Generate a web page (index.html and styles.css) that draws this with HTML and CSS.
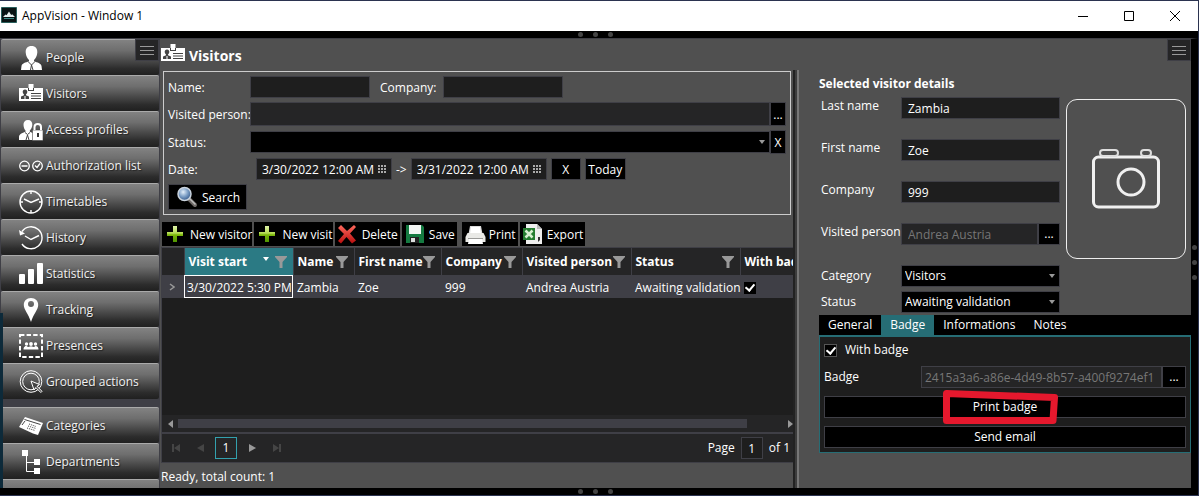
FILE: index.html
```html
<!DOCTYPE html>
<html lang="en">
<head>
<meta charset="utf-8">
<title>AppVision - Window 1</title>
<link rel="stylesheet" href="styles.css">
</head>
<body>
<svg class="defs" aria-hidden="true">
  <defs>
    <linearGradient id="green" x1="0" y1="0" x2="0" y2="1"><stop offset="0" stop-color="#dff2a8"/><stop offset=".45" stop-color="#b5dc54"/><stop offset=".55" stop-color="#7cb80c"/><stop offset="1" stop-color="#4f9400"/></linearGradient>
    <linearGradient id="red" x1="0" y1="0" x2="0" y2="1"><stop offset="0" stop-color="#ff6a5e"/><stop offset="1" stop-color="#b80d0d"/></linearGradient>
    <radialGradient id="lens" cx=".4" cy=".35" r=".7"><stop offset="0" stop-color="#e4effa"/><stop offset=".5" stop-color="#7d9fc6"/><stop offset="1" stop-color="#2c5184"/></radialGradient>
    <symbol id="badge" viewBox="0 0 24 24"><path fill="#fff" d="M0 6h9.500V2h5v4H24v13H0z"/><path fill="#444" d="M9 6h1v2h4V6h1v3H9zM12 11h10v1H12zM12 13.500h10v1H12zM12 16h10v1H12z"/><path fill="#444" d="M6 7.500c1.600 0 2.300 1 2.300 2.300S7.500 12 7 12.400v.8l3 1.200V17H2v-2.600l3-1.200v-.8C4.300 12 3.700 11 3.700 9.800S4.400 7.500 6 7.500z"/><path stroke="#fff" stroke-width="1" d="M6 14v3"/></symbol>
    <symbol id="plus" viewBox="0 0 24 24"><path fill="url(#green)" d="M10 4h4v6h6v4h-6v6h-4v-6H4v-4h6z"/></symbol>
    <symbol id="funnel" viewBox="0 0 12 12"><path fill="#999" d="M0 0h12v1L7.500 6v6h-3V6L0 1z"/></symbol>
    <symbol id="calendar" viewBox="0 0 9 9"><path fill="#aaa" d="M0 0h2v2H0zM3 0h2v2H3zM6 0h2v2H6zM0 3h2v2H0zM3 3h2v2H3zM6 3h2v2H6zM0 6h2v2H0zM3 6h2v2H3zM6 6h2v2H6z"/></symbol>
  </defs>
</svg>
<div class="window">
  <header class="titlebar">
    <svg class="logo" viewBox="0 0 16 16"><path fill="#0a1414" stroke="#295f5c" d="M.5.500h15v15H.5z"/><path fill="#e6efee" d="M2 10l2.500-2.500 1 .8L8 4.500l2.200 3.500 1-.8L14 10z"/><path stroke="#3c8a85" d="M3 11.500h10"/></svg>
    <h1 class="title">AppVision - Window 1</h1>
    <button class="sys" aria-label="Minimize"><svg viewBox="0 0 12 12"><path d="M1 6.500h10"/></svg></button>
    <button class="sys" aria-label="Maximize"><svg viewBox="0 0 12 12"><path d="M1.500 1.500h9v9h-9z"/></svg></button>
    <button class="sys" aria-label="Close"><svg viewBox="0 0 12 12"><path d="M1 1l10 10M11 1L1 11"/></svg></button>
  </header>
  <div class="edge"><i></i><i></i><i></i></div>
  <div class="body">
    <nav class="sidebar">
      <button class="burger side-burger" aria-label="Menu"><i></i><i></i><i></i></button>
      <a class="nav" href="#people"><svg viewBox="0 0 24 24"><path fill="#fff" d="M12.500 0C16.500 0 18.500 2.500 18.300 6.500c-.2 3.500-1.800 6-3.300 7.500v1.500c3.500.8 7 2 7.500 4.500l.5 4H2l.5-4c.5-2.500 4-3.700 7.500-4.500V14c-1.500-1.500-3.100-4-3.300-7.500C6.500 2.500 8.500 0 12.500 0z"/><path stroke="#444" fill="none" d="M9.500 16l3 3 3-3M12.500 19l-1 5M12.500 19l1.500 5"/></svg>People</a>
      <a class="nav" href="#visitors"><svg viewBox="0 0 24 24"><use href="#badge"/></svg>Visitors</a>
      <a class="nav" href="#access"><svg viewBox="0 0 24 24"><path fill="#fff" d="M9 2c3 0 4.500 2 4.300 5-.2 2.500-1.300 4.500-2.500 5.500v1.300l4 1.700V22H0v-3c0-2.500 3-4 6.500-5.200v-1.300C5.300 11.500 4.700 9.500 4.500 7 4.300 4 6 2 9 2z"/><path stroke="#444" fill="none" d="M6 14.500l2.500 2 2.500-2M8.500 17l-1.500 5M8.500 17l1.500 5"/><path fill="#fff" stroke="#444" stroke-width=".6" d="M13.500 12H24v10.500H13.500z"/><path stroke="#fff" stroke-width="2" fill="none" d="M15.500 12V9c0-4 6.500-4 6.500 0v3"/><path fill="#333" d="M18 15h2v4h-2z"/></svg>Access profiles</a>
      <a class="nav" href="#authorization"><svg viewBox="0 0 24 24"><g fill="none" stroke="#fff" stroke-width="1.300"><circle cx="5.500" cy="12" r="4.800"/><circle cx="18.500" cy="12" r="4.800"/><path d="M2.500 12h6M16 11.500l2 2 3-4"/></g></svg>Authorization list</a>
      <a class="nav" href="#timetables"><svg viewBox="0 0 24 24"><g fill="none" stroke="#fff" stroke-width="1.400"><circle cx="12" cy="12" r="11"/><path d="M5 9l7 3.500L20 9M12 1v3M12 20v3M1 12h3M20 12h3"/></g></svg>Timetables</a>
      <a class="nav" href="#history"><svg viewBox="0 0 24 24"><g fill="none" stroke="#fff" stroke-width="1.400"><path d="M3 5.500A11 11 0 1 1 3 18M6 10l6 3.500 8-4"/></g><path fill="#fff" d="M0 4l1 5.500 5-2z"/></svg>History</a>
      <a class="nav" href="#statistics"><svg viewBox="0 0 24 24"><g fill="#fff"><rect y="12" width="6" height="10" rx="1"/><rect x="9" y="7" width="6" height="15" rx="1"/><rect x="18" y="1" width="6" height="21" rx="1"/></g></svg>Statistics</a>
      <a class="nav" href="#tracking"><svg viewBox="0 0 24 24"><path fill="#fff" fill-rule="evenodd" d="M12 0c4.500 0 7.200 3 7.200 7 0 4.500-4.700 9-7.200 17C9.500 16 4.800 11.500 4.800 7c0-4 2.700-7 7.200-7zm0 3a3 3 0 1 0 0 6 3 3 0 0 0 0-6z"/></svg>Tracking</a>
      <a class="nav" href="#presences"><svg viewBox="0 0 24 24"><path fill="none" stroke="#fff" stroke-width="2" stroke-dasharray="4.400 2.200" d="M1 1h22v22H1z"/><g fill="#fff"><circle cx="7.500" cy="10" r="1.700"/><circle cx="12" cy="10" r="1.900"/><circle cx="16.500" cy="10" r="1.700"/><path d="M4.500 15.500c0-3 2-3.500 3-3.500l1.500 1 3-.8 3 .8 1.500-1c1 0 3 .500 3 3.500z"/></g></svg>Presences</a>
      <a class="nav" href="#grouped"><svg viewBox="0 0 24 24"><g fill="none" stroke="#fff"><circle cx="12" cy="11.500" r="10.800"/><circle cx="12" cy="11.500" r="8.300"/><path fill="#444" d="M12 11l3 9 1.800-2.500 5 5 1.200-1.200-5-5 2.500-1.800z"/></g></svg>Grouped actions</a>
      <a class="nav nav-group" href="#categories"><svg viewBox="0 0 24 24"><path fill="#fff" d="M6 3l18 6-5 12-5-1.500L0 13z"/><g fill="none" stroke="#444"><path d="M5.500 5.500l16 5M3 11l3-4"/><path stroke-dasharray="1 1" d="M9 12l8 2.500M8 14l8 2.500M10 10l7 2.500"/></g></svg>Categories</a>
      <a class="nav" href="#departments"><svg viewBox="0 0 24 24"><path fill="#fff" d="M3 0h6v6H3zM15 9h6v6h-6zM15 18h6v6h-6z"/><path fill="none" stroke="#fff" d="M7.500 6v15.500H15M7.500 12.500H15"/></svg>Departments</a>
      <span class="nav"></span>
    </nav>

    <main class="main">
      <h2 class="heading"><svg viewBox="0 0 24 24"><use href="#badge"/></svg>Visitors</h2>
      <form class="search" onsubmit="return false">
        <div class="row">
          <label class="key" for="name">Name:</label><input class="box short" id="name">
          <label class="key2" for="company">Company:</label><input class="box short" id="company">
        </div>
        <div class="row tall">
          <label class="key" for="visited">Visited person:</label><input class="box grow ro" id="visited" readonly><button class="btn pick">...</button>
        </div>
        <div class="row tall">
          <label class="key" for="status">Status:</label><span class="select grow"><select id="status"><option></option></select></span><button class="btn pick">X</button>
        </div>
        <div class="row dates">
          <label class="key" for="from">Date:</label>
          <span class="date"><input id="from" value="3/30/2022 12:00 AM"><svg viewBox="0 0 9 9"><use href="#calendar"/></svg></span>
          <label for="to">-&gt;</label>
          <span class="date"><input id="to" value="3/31/2022 12:00 AM"><svg viewBox="0 0 9 9"><use href="#calendar"/></svg></span>
          <button class="btn clear">X</button><button class="btn today">Today</button>
        </div>
        <button class="btn go"><svg viewBox="0 0 24 24"><path stroke="#6f6a68" stroke-width="4" stroke-linecap="round" d="M14 14l6 6"/><path stroke="#bbb" stroke-width="1.500" d="M14.500 13.500l6 6"/><circle cx="9.500" cy="9" r="6.500" fill="url(#lens)" stroke="#c9d3de" stroke-width="1.500"/></svg>Search</button>
      </form>

      <div class="toolbar">
        <button class="tool"><svg viewBox="0 0 24 24"><use href="#plus"/></svg>New visitor</button>
        <button class="tool"><svg viewBox="0 0 24 24"><use href="#plus"/></svg>New visit</button>
        <button class="tool snug"><svg viewBox="0 0 24 24"><path fill="url(#red)" d="M5 3l6 6 7-6 2 2-6 6.500 6 7-4 3-5.500-6.500L5 21.500 2 19l6-7-6-6z"/></svg>Delete</button>
        <button class="tool snug"><svg viewBox="0 0 24 24"><path fill="#157a41" d="M3 3h16l2 2v16H3z"/><path fill="#f2f5f3" d="M6 3h12v9H6z"/><path fill="#222" d="M7 15h9v6H7z"/><path fill="#ddd" d="M8 16h4v4H8z"/></svg>Save</button>
        <span class="gap"></span>
        <button class="tool snug"><svg viewBox="0 0 24 24"><path fill="#dcdcdc" d="M7 4h11l1.500 8h-14z"/><path fill="#fff" d="M8 5h9l1 7H7z"/><path fill="#e9e9e6" d="M4.500 11h16l2 4v5h-20v-5z"/><path fill="#9a9a98" d="M5 16h15v1H5z"/><path fill="#fff" d="M6 17h13l1 5H5z"/></svg>Print</button>
        <button class="tool snug"><svg viewBox="0 0 24 24"><path fill="#eee" d="M5 2h11l5 5v15H5z"/><path fill="#bbb" d="M16 2v5h5z"/><path fill="#257d30" d="M2 6h12v12H2z"/><path stroke="#d7f0d0" stroke-width="2.500" d="M4.500 8.500l7 7M11.500 8.500l-7 7"/><path fill="#333" d="M17 15h2v3l-2 2z"/></svg>Export</button>
      </div>

      <section class="gridbox">
        <div class="gridview">
          <table class="table">
            <colgroup><col class="c0"><col class="c1"><col class="c2"><col class="c3"><col class="c4"><col class="c1"><col class="c1"><col class="c7"></colgroup>
            <thead><tr>
              <th></th>
              <th class="sorted"><span class="th">Visit start<i class="sort"></i><svg viewBox="0 0 12 12"><use href="#funnel"/></svg></span></th>
              <th><span class="th">Name<svg viewBox="0 0 12 12"><use href="#funnel"/></svg></span></th>
              <th><span class="th">First name<svg viewBox="0 0 12 12"><use href="#funnel"/></svg></span></th>
              <th><span class="th">Company<svg viewBox="0 0 12 12"><use href="#funnel"/></svg></span></th>
              <th><span class="th">Visited person<svg viewBox="0 0 12 12"><use href="#funnel"/></svg></span></th>
              <th><span class="th">Status<svg viewBox="0 0 12 12"><use href="#funnel"/></svg></span></th>
              <th><span class="th">With badge</span></th>
            </tr></thead>
            <tbody><tr>
              <td class="mark"><svg viewBox="0 0 6 8"><path fill="none" stroke="#999" stroke-width="1.500" d="M1 1l4 3-4 3"/></svg></td>
              <td class="current">3/30/2022 5:30 PM</td><td>Zambia</td><td>Zoe</td><td>999</td><td>Andrea Austria</td><td>Awaiting validation</td>
              <td><input type="checkbox" class="check" aria-label="With badge" checked></td>
            </tr></tbody>
          </table>
        </div>
        <div class="scroll"><i class="left"></i><span class="track"><span class="thumb"></span></span><i class="right"></i></div>
        <div class="pager">
          <button aria-label="First page"><svg viewBox="0 0 10 10"><path fill="#454545" d="M1 1h2v8H1zM9 1v8L3 5z"/></svg></button>
          <button aria-label="Previous page"><svg viewBox="0 0 10 10"><path fill="#454545" d="M8 1v8L1 5z"/></svg></button>
          <button class="page">1</button>
          <button aria-label="Next page"><svg viewBox="0 0 10 10"><path fill="#999" d="M2 1v8l7-4z"/></svg></button>
          <button aria-label="Last page"><svg viewBox="0 0 10 10"><path fill="#454545" d="M7 1h2v8H7zM1 1v8l6-4z"/></svg></button>
          <label class="of" for="page">Page</label><input id="page" class="pageno" value="1"><span>of 1</span>
        </div>
      </section>
      <p class="statusbar">Ready, total count: 1</p>
    </main>

    <div class="splitter"></div>

    <aside class="details">
      <button class="burger" aria-label="Details menu"><i></i><i></i><i></i></button>
      <h3 class="sub">Selected visitor details</h3>
      <div class="person">
        <div class="fields">
          <div class="field"><label for="last">Last name</label><input class="box" id="last" value="Zambia"></div>
          <div class="field"><label for="first">First name</label><input class="box" id="first" value="Zoe"></div>
          <div class="field"><label for="comp">Company</label><input class="box" id="comp" value="999"></div>
          <div class="field"><label for="vp">Visited person</label><span class="combo"><input class="box ro" id="vp" value="Andrea Austria" readonly><button class="btn dots">...</button></span></div>
        </div>
        <button class="photo" aria-label="Take photo"><svg viewBox="0 0 70 62"><g fill="none" stroke="#f0f0f0" stroke-width="3"><rect x="2.500" y="9" width="65" height="50" rx="5"/><circle cx="40" cy="34" r="13"/></g><g fill="none" stroke="#ddd" stroke-width="2"><rect x="9" y="2" width="18" height="6" rx="3"/><rect x="50" y="2" width="10" height="6" rx="3"/></g></svg></button>
      </div>
      <div class="choices">
        <div class="field"><label for="cat">Category</label><span class="select"><select id="cat"><option>Visitors</option></select></span></div>
        <div class="field"><label for="st">Status</label><span class="select"><select id="st"><option>Awaiting validation</option></select></span></div>
      </div>
      <div class="tabs" role="tablist">
        <button role="tab">General</button><button role="tab" class="on" aria-selected="true">Badge</button><button role="tab">Informations</button><button role="tab">Notes</button>
      </div>
      <div class="tabpanel">
        <label class="with"><input type="checkbox" class="check" checked>With badge</label>
        <div class="idrow"><label for="bid">Badge</label><input class="box ro" id="bid" value="2415a3a6-a86e-4d49-8b57-a400f9274ef1" readonly><button class="btn dots">...</button></div>
        <div class="marked">
          <button class="btn wide">Print badge</button>
          <svg class="marker" viewBox="0 0 116 36"><path fill="none" stroke="#e5182d" stroke-width="7" stroke-linejoin="round" d="M4.500 4.500l108 4-1.500 23H4.500z"/></svg>
        </div>
        <button class="btn wide">Send email</button>
      </div>
    </aside>
  </div>
  <div class="edge"><i></i><i></i><i></i></div>
  <div class="grip"><i></i><i></i><i></i></div>
</div>
</body>
</html>
```
FILE: styles.css
```css
* { box-sizing: border-box; }
body {
  margin: 0;
  height: 100vh;
  overflow: hidden;
  background: #2b3350;
  color: #fff;
  font: 12px/16px "Open Sans", "Noto Sans", sans-serif;
}
button, input, select { font: inherit; color: inherit; margin: 0; padding: 0; border: 0; border-radius: 0; }
button { background: none; }
h1, h2, h3, p { margin: 0; font-size: 12px; }
svg { display: block; flex: none; }
.defs { position: absolute; width: 0; height: 0; }

.window {
  position: relative;
  display: flex;
  flex-direction: column;
  height: 100vh;
  padding: 1px 1px 1px 0;
}
.titlebar {
  display: flex;
  align-items: center;
  height: 30px;
  flex: none;
  background: #fff;
  color: #000;
}
.logo { width: 16px; height: 16px; margin: 0 5px 2px 1px; }
.title { flex: 1; font-weight: 400; }
.sys { display: grid; place-items: center; width: 46px; height: 30px; }
.sys svg { width: 12px; height: 12px; fill: none; stroke: #000; }

.edge {
  display: flex;
  gap: 10px;
  justify-content: center;
  align-items: center;
  flex: none;
  height: 7px;
  padding-right: 8px;
  background: #000;
}
.edge i, .grip i { width: 5px; height: 5px; border-radius: 50%; background: #444; }
.grip {
  position: absolute;
  right: 2px;
  top: 245px;
  display: grid;
  gap: 10px;
}

.body {
  flex: 1;
  min-height: 0;
  display: flex;
  border-top: 1px solid #3f3f46;
  border-right: 7px solid #000;
  background: #505050;
}

/* navigation */
.sidebar {
  position: relative;
  width: 160px;
  flex: none;
  padding-left: 1px;
  overflow: hidden;
  background: #3f3f46;
  border-right: 1px solid #3f3f46;
}
.sidebar::before {
  content: "";
  position: absolute;
  left: 0;
  top: 274px;
  bottom: 0;
  width: 3px;
  background: #0d2a3a;
}
.nav {
  display: flex;
  align-items: center;
  gap: 3px;
  height: 36px;
  padding-left: 18px;
  border-top: 1px solid #aaa;
  border-radius: 2px;
  background: linear-gradient(#828282, #6e6e6e 30%, #2c2c2c 82%, #202020);
  color: #f0f0f0;
  text-decoration: none;
  text-shadow: 1px 1px 1px #222;
}
.nav svg { width: 24px; height: 24px; }
.nav-group { margin-top: 8px; }
.burger {
  display: flex;
  flex-direction: column;
  justify-content: center;
  align-items: center;
  gap: 3px;
  width: 24px;
  height: 22px;
  background: #252526;
  border: 1px solid #3f3f46;
}
.burger i { width: 14px; height: 1px; background: #999; }
.side-burger { position: absolute; right: 0; top: 0; }

/* visitors list */
.main {
  flex: 1;
  min-width: 0;
  display: flex;
  flex-direction: column;
}
.heading {
  display: flex;
  align-items: center;
  gap: 4px;
  height: 32px;
  padding: 2px 0 0 1px;
  font-size: 14px;
}
.heading svg { width: 24px; height: 24px; margin-bottom: 4px; }
.search {
  display: flex;
  flex-direction: column;
  align-items: stretch;
  gap: 4px;
  margin: 0 2px 0 3px;
  padding: 4px;
  border: 1px solid #ccc;
}
.row { display: flex; align-items: center; height: 22px; }
.row label { padding-top: 2px; }
.tall { height: 24px; }
.key { width: 82px; white-space: nowrap; }
.key2 { width: 63px; margin-left: 10px; }
.box {
  height: 22px;
  min-width: 0;
  padding: 0 6px;
  background: #1e1e1e;
  border: 1px solid #3f3f46;
}
.short { width: 120px; }
.grow { flex: 1; }
.ro { background: #252526; color: #777; }
.tall .box { height: 24px; }
.btn {
  height: 22px;
  background: #000;
  border: 1px solid #3f3f46;
  text-align: center;
}
.row .btn, .go, .tool { padding-top: 2px; }
.row .pick { width: 16px; height: 24px; }
.select { position: relative; display: block; height: 22px; }
.select select {
  display: block;
  width: 100%;
  height: 22px;
  padding: 0 3px;
  appearance: none;
  background: #000;
  border: 1px solid #3f3f46;
}
.select::after {
  content: "";
  position: absolute;
  right: 5px;
  top: 9px;
  border: 3px solid transparent;
  border-top: 4px solid #999;
  border-bottom: 0;
}
.dates { gap: 4px; }
.dates .key { width: 84px; }
.date {
  display: flex;
  align-items: center;
  width: 136px;
  height: 22px;
  padding: 0 4px 0 5px;
  background: #1e1e1e;
  border: 1px solid #3f3f46;
}
.date input { flex: 1; min-width: 0; padding-top: 2px; background: none; }
.date svg { width: 9px; height: 9px; }
.clear { width: 30px; }
.today { width: 41px; }
.go {
  display: flex;
  align-items: center;
  align-self: flex-start;
  gap: 3px;
  height: 26px;
  padding-left: 6px;
  padding-right: 6px;
}
.go svg { width: 24px; height: 24px; margin-bottom: 2px; }

.toolbar { display: flex; gap: 2px; padding: 7px 0 0 2px; }
.tool {
  display: flex;
  align-items: center;
  gap: 3px;
  height: 24px;
  padding-left: 1px;
  background: #000;
  white-space: nowrap;
}
.tool svg { width: 24px; height: 24px; margin-bottom: 2px; }
.snug { gap: 2px; padding-right: 2px; }
.gap { width: 1px; }

.gridbox {
  flex: 1;
  min-height: 0;
  display: flex;
  flex-direction: column;
  margin: 1px 0 0 1px;
  border: 1px solid #3f3f46;
  border-right: 0;
  background: #1e1e1e;
}
.gridview { flex: 1; overflow: hidden; }
.table { width: 653px; table-layout: fixed; border-collapse: collapse; }
.c0 { width: 22px; }
.c1 { width: 109px; }
.c2 { width: 61px; }
.c3 { width: 87px; }
.c4 { width: 81px; }
.c7 { width: 75px; }
.table th {
  height: 27px;
  padding: 0 6px 0 4px;
  background: #252526;
  border-right: 1px solid #3f3f46;
  text-align: left;
  white-space: nowrap;
}
.table .sorted { background: #2b7a84; }
.th { display: flex; align-items: center; }
.th svg { width: 12px; height: 12px; margin-left: auto; }
.sort {
  margin: 0 0 6px auto;
  border: 3px solid transparent;
  border-top: 4px solid #fff;
  border-bottom: 0;
}
.sort + svg { margin-left: 6px; }
.table td {
  height: 23px;
  padding: 2px 0 0 4px;
  background: #3f3f46;
  white-space: nowrap;
}
.table .mark { padding: 0 7px; }
.mark svg { width: 6px; height: 8px; }
.table .current { padding-left: 3px; outline: 1px solid #fff; outline-offset: -1px; }
.check {
  display: grid;
  place-items: center;
  width: 12px;
  height: 12px;
  appearance: none;
  background: #000;
  flex: none;
}
.check:checked::before {
  content: "";
  width: 4px;
  height: 7px;
  margin-bottom: 2px;
  border: solid #fff;
  border-width: 0 2px 2px 0;
  transform: rotate(40deg);
}
.scroll {
  display: flex;
  align-items: center;
  gap: 5px;
  height: 17px;
  padding-left: 6px;
  background: #252526;
}
.scroll i { border: 4px solid transparent; }
.scroll .left { border-left: 0; border-right: 5px solid #999; }
.scroll .right { border-right: 0; border-left: 5px solid #999; }
.track { flex: 1; }
.thumb { display: block; width: 94%; height: 9px; background: #3f3f46; }
.pager {
  display: flex;
  align-items: center;
  gap: 4px;
  height: 30px;
  padding: 0 3px;
  border-top: 2px solid #3f3f46;
  background: #252526;
}
.pager button { display: grid; place-items: center; width: 21px; height: 22px; }
.pager svg { width: 10px; height: 10px; }
.pager .page { width: 22px; border: 1px solid #33a1ae; }
.of { margin-left: auto; }
.pageno { width: 22px; height: 22px; margin: 0 2px; background: #1e1e1e; border: 1px solid #3f3f46; text-align: center; }
.statusbar { padding: 6px 1px 3px; }

.splitter {
  width: 7px;
  flex: none;
  margin-top: 31px;
  background: linear-gradient(90deg, #222 0 2px, #3c3c3c 2px 4px, #777 4px 6px, #505050 6px);
}

/* visitor details */
.details {
  position: relative;
  width: 391px;
  flex: none;
  padding: 37px 0 0 19px;
}
.details > .burger { position: absolute; right: 0; top: 0; }
.sub { white-space: nowrap; }
.person { display: flex; gap: 6px; align-items: flex-start; padding: 5px 5px 0 0; }
.fields { flex: 1; display: grid; gap: 20px; }
.person .field > label { margin-bottom: 4px; }
.field { display: grid; grid-template-columns: 80px minmax(0, 1fr); align-items: center; padding-left: 2px; height: 22px; white-space: nowrap; }
.combo, .idrow { display: flex; }
.combo .box { flex: 1; }
.dots { width: 22px; }
.photo {
  display: grid;
  place-items: center;
  width: 120px;
  height: 160px;
  margin-top: 2px;
  border: 1px solid #eee;
  border-radius: 11px;
}
.photo svg { width: 70px; height: 62px; }
.choices { display: grid; gap: 4px; padding: 6px 131px 2px 0; }
.tabs { display: flex; background: #000; }
.tabs button { height: 20px; padding: 0 9px; }
.tabs .on { background: #266d75; }
.tabpanel {
  display: flex;
  flex-direction: column;
  gap: 8px;
  padding: 5px 4px 4px;
  border: 1px solid #266d75;
  border-top-width: 2px;
  background: #1e1e1e;
}
.with { display: flex; align-items: center; gap: 8px; }
.with .check { border: 1px solid #555; width: 13px; height: 13px; }
.idrow { align-items: center; }
.idrow label { width: 97px; }
.idrow .box { flex: 1; padding: 0 3px; }
.idrow .dots { width: 24px; }
.marked { position: relative; display: grid; }
.marker { position: absolute; left: 118px; top: -7px; width: 116px; height: 36px; pointer-events: none; }
```
